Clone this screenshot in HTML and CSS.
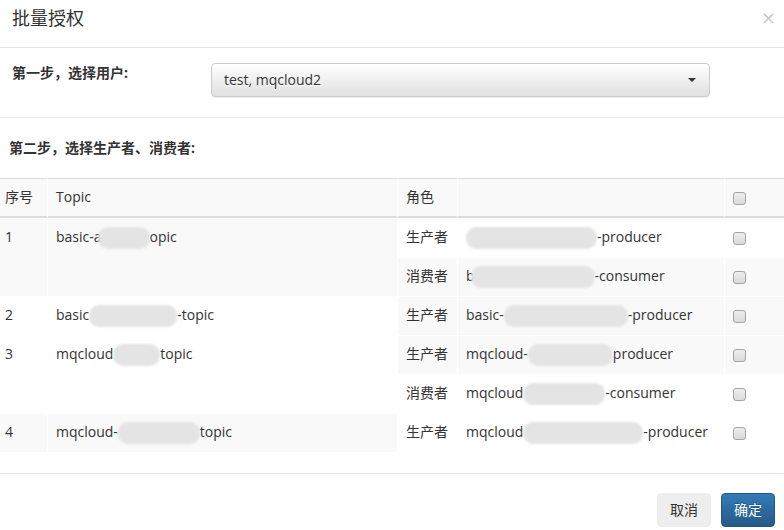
FILE: index.html
```html
<!DOCTYPE html>
<html lang="zh-CN">
<head>
<meta charset="utf-8">
<title>批量授权</title>
<link rel="stylesheet" href="styles.css">
</head>
<body>
<div class="modal">
  <div class="modal-header">
    <h4 class="modal-title">批量授权</h4>
    <span class="close">×</span>
  </div>

  <div class="step step-one">
    <label class="step-label">第一步，选择用户:</label>
    <div class="select">
      <span class="select-text">test, mqcloud2</span>
      <span class="caret"></span>
    </div>
  </div>

  <div class="step step-two">
    <div class="step-label">第二步，选择生产者、消费者:</div>
  </div>

  <table class="grid">
    <thead>
      <tr>
        <th class="c-no">序号</th>
        <th class="c-topic">Topic</th>
        <th class="c-role">角色</th>
        <th class="c-name"></th>
        <th class="c-chk"><input type="checkbox" class="chk"></th>
      </tr>
    </thead>
    <tbody>
      <tr>
        <td class="g top" rowspan="2">1</td>
        <td class="g top" rowspan="2">basic-a<span class="blur ov b52"></span>opic</td>
        <td>生产者</td>
        <td><span class="blur b131"></span>-producer</td>
        <td><input type="checkbox" class="chk"></td>
      </tr>
      <tr>
        <td class="g">消费者</td>
        <td class="g">b<span class="blur ov b124"></span>-consumer</td>
        <td class="g"><input type="checkbox" class="chk"></td>
      </tr>
      <tr>
        <td class="top">2</td>
        <td class="top">basic<span class="blur b88"></span>-topic</td>
        <td class="g">生产者</td>
        <td class="g">basic-<span class="blur b124"></span>-producer</td>
        <td class="g"><input type="checkbox" class="chk"></td>
      </tr>
      <tr>
        <td class="top" rowspan="2">3</td>
        <td class="top" rowspan="2">mqcloud<span class="blur b47"></span>topic</td>
        <td class="g">生产者</td>
        <td class="g">mqcloud-<span class="blur b85"></span>producer</td>
        <td class="g"><input type="checkbox" class="chk"></td>
      </tr>
      <tr>
        <td>消费者</td>
        <td>mqcloud<span class="blur b82"></span>-consumer</td>
        <td><input type="checkbox" class="chk"></td>
      </tr>
      <tr>
        <td class="g top">4</td>
        <td class="g top">mqcloud-<span class="blur b82"></span>topic</td>
        <td>生产者</td>
        <td>mqcloud<span class="blur b120"></span>-producer</td>
        <td><input type="checkbox" class="chk"></td>
      </tr>
    </tbody>
  </table>

  <div class="modal-footer">
    <button class="btn btn-default">取消</button>
    <button class="btn btn-primary">确定</button>
  </div>
</div>
</body>
</html>
```

FILE: styles.css
```css
* { box-sizing: border-box; }

html, body {
  margin: 0;
  padding: 0;
  background: #fff;
}

body {
  font-family: "Open Sans", "Noto Sans CJK SC", sans-serif;
  font-size: 14px;
  color: #333;
}

.modal {
  width: 784px;
  height: 530px;
  overflow: hidden;
}

/* header */
.modal-header {
  display: flex;
  justify-content: space-between;
  align-items: flex-start;
  height: 48px;
  padding: 5px 8px 0 12px;
  border-bottom: 1px solid #e5e5e5;
}

.modal-title {
  margin: 0;
  font-size: 18px;
  font-weight: normal;
  line-height: 26px;
  color: #333;
}

.close {
  font-family: "DejaVu Sans", sans-serif;
  font-size: 18px;
  font-weight: normal;
  line-height: 26px;
  color: #000;
  opacity: 0.22;
}

/* steps */
.step-one {
  display: flex;
  align-items: flex-start;
  padding: 15px 0 20px 12px;
  border-bottom: 1px solid #eee;
}

.step-label {
  font-weight: bold;
  line-height: 20px;
  color: #333;
}

.step-one .step-label {
  width: 199px;
  flex: none;
}

.select {
  width: 499px;
  height: 34px;
  flex: none;
  display: flex;
  align-items: center;
  justify-content: space-between;
  padding: 6px 13px 6px 12px;
  border: 1px solid #ccc;
  border-radius: 4px;
  background: linear-gradient(to bottom, #fff 0%, #e0e0e0 100%);
  box-shadow: inset 0 1px 0 rgba(255,255,255,.15), 0 1px 1px rgba(0,0,0,.075);
  text-shadow: 0 1px 0 #fff;
  line-height: 20px;
}

.caret {
  width: 0;
  height: 0;
  border-top: 4px solid #333;
  border-left: 4px solid transparent;
  border-right: 4px solid transparent;
}

.step-two {
  padding: 20px 0 20px 9px;
}

/* table */
.grid {
  width: 784px;
  table-layout: fixed;
  border-collapse: separate;
  border-spacing: 0;
}

.grid th,
.grid td {
  text-align: left;
  padding: 8px;
  white-space: nowrap;
  overflow: hidden;
}

.grid th {
  font-weight: normal;
  line-height: 21px;
  padding-top: 7px;
  padding-bottom: 9px;
  background: #f9f9f9;
  border-top: 1px solid #ddd;
  border-bottom: 2px solid #ddd;
  border-left: 1px solid #fff;
}

.grid th:first-child { border-left: 0; }

.grid td {
  line-height: 22px;
  padding-top: 7px;
  padding-bottom: 9px;
  border-top: 1px solid #fff;
  border-left: 1px solid #fff;
  vertical-align: middle;
  background: #fff;
}

.grid td.top { vertical-align: top; }
.grid tr td.top:first-child { border-left: 0; padding-left: 5px; }
.grid th.c-no { padding-left: 5px; }

.grid td.g { background: #f9f9f9; }

.c-no { width: 47px; }
.c-topic { width: 350px; }
.c-role { width: 60px; }
.c-name { width: 267px; }
.c-chk { width: 60px; }

.chk {
  -webkit-appearance: none;
  appearance: none;
  width: 13px;
  height: 13px;
  margin: 0;
  vertical-align: middle;
  position: relative;
  top: 0;
  border: 1px solid #a4a4a4;
  border-radius: 3px;
  background: linear-gradient(to bottom, #ededed, #dadada);
}

/* blurred (masked) text */
.blur {
  display: inline-block;
  height: 22px;
  vertical-align: top;
  position: relative;
  top: 1px;
  background: #e4e4e4;
  border-radius: 10px;
  filter: blur(1px);
}
.blur.ov { margin-left: -4px; }
.b47 { width: 47px; }
.b52 { width: 52px; }
.b82 { width: 82px; }
.b85 { width: 85px; }
.b88 { width: 88px; }
.b120 { width: 120px; }
.b124 { width: 124px; }
.b131 { width: 131px; }

/* footer */
.modal-footer {
  display: flex;
  justify-content: flex-end;
  gap: 10px;
  margin-top: 21px;
  padding: 19px 9px 0 0;
  border-top: 1px solid #e5e5e5;
}

.btn {
  font-family: "Open Sans", "Noto Sans CJK SC", sans-serif;
  font-size: 14px;
  line-height: 20px;
  height: 34px;
  padding: 6px 12px;
  border: 1px solid transparent;
  border-radius: 4px;
  cursor: pointer;
}

.btn-default {
  background: #eee;
  border-color: #eee;
  color: #333;
}

.btn-primary {
  color: #fff;
  background: linear-gradient(to bottom, #337ab7 0%, #265a88 100%);
  border-color: #245580;
  text-shadow: 0 -1px 0 rgba(0,0,0,.2);
}
```
